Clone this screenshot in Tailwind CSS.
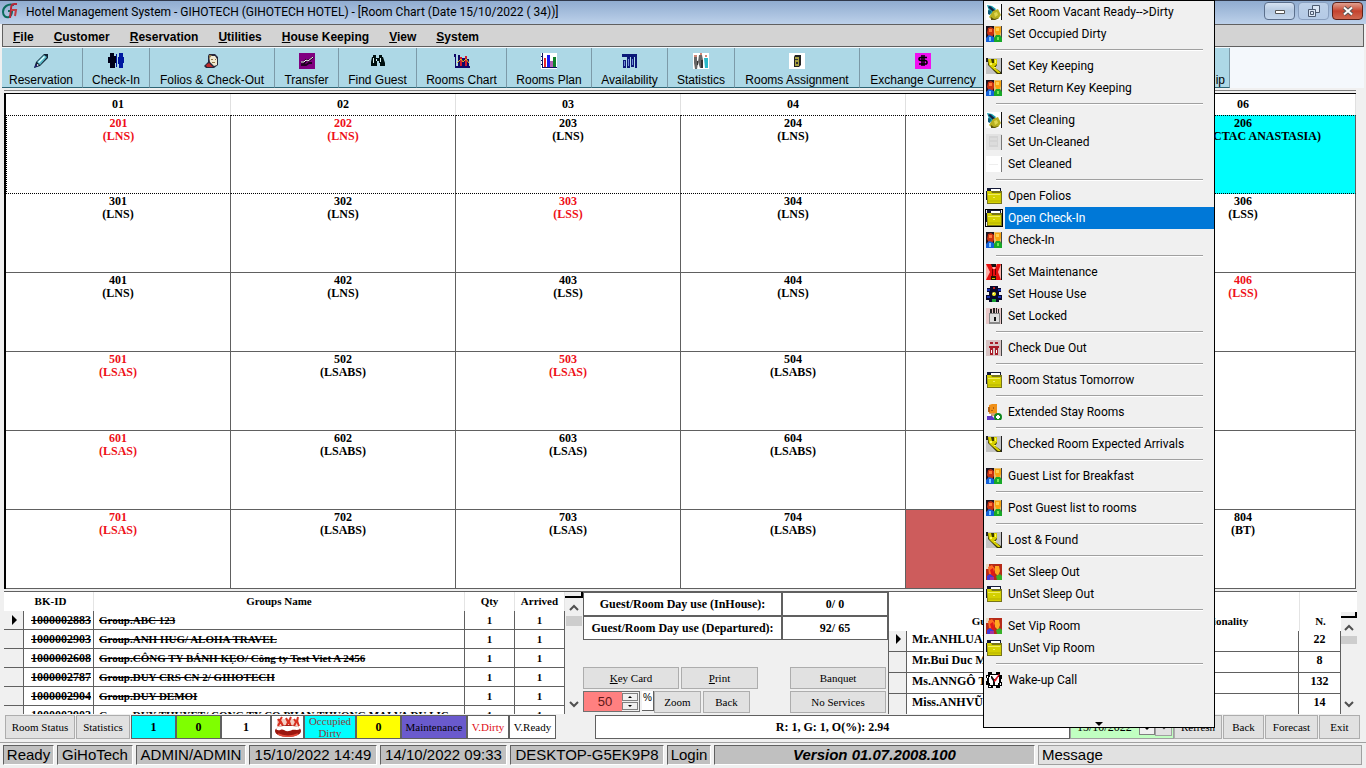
<!DOCTYPE html>
<html lang="en">
<head>
<meta charset="utf-8">
<title>Hotel Management System</title>
<script src="https://cdn.jsdelivr.net/npm/@tailwindcss/browser@4"></script>
</head>
<body class="relative flex h-screen w-full flex-col overflow-hidden bg-[#f0f0f0] font-['Liberation_Sans',sans-serif] text-xs text-black">

<svg class="hidden" aria-hidden="true">
  <symbol id="i-broom" viewBox="0 0 16 16"><path fill="#fff" d="M0 0h15v16H0z"/><path fill="#111" d="M15 0h1v16h-1z"/><path fill="#1aa0b0" d="M1 1l5 1 4 3-5 6-2-4z"/><path fill="#124" d="M2 3l2-1 7 6-3 1z"/><path fill="#0c5a78" d="M2 6l3 1-1 4-2-1z"/><path fill="#b8b020" d="M7 7l5-2 3 6-3 4-6 1-3-3z"/><path fill="#e0d850" d="M8 9l3-1 1 3-3 2z"/><path fill="#5a5410" d="M5 13l3 2 5-1-4 2H5z"/></symbol>
  <symbol id="i-people" viewBox="0 0 16 16"><path fill="#1c1420" d="M0 0h8v12H0z"/><path fill="#e8c070" d="M8 0h7v16H8z"/><path fill="#444" d="M15 0h1v16h-1z"/><path fill="#c83010" d="M2 2l3-1 3 2v5l-2 3H3L1 7z"/><path fill="#ff7838" d="M3 3h3v3H3z"/><path fill="#f8a410" d="M9 1h6v5l-2 4h-2L9 6z"/><path fill="#ffd050" d="M10 2h3v3h-3z"/><path fill="#1460d8" d="M0 12l3-3 3 1 3 2v4H0z"/><path fill="#7cc8ff" d="M3 11h2v4H3z"/><path fill="#18a828" d="M8 12l2-3h4l2 3v4H8z"/><path fill="#70e850" d="M11 11h2v3h-2z"/></symbol>
  <symbol id="i-redpeople" viewBox="0 0 16 16"><path fill="#b52a18" d="M0 0h16v16H0z"/><path fill="#e8d8c0" d="M0 0h3v5H0z"/><path fill="#ff6a20" d="M2 3l4-2 3 4-2 6-4-1z"/><path fill="#e01818" d="M4 6l3-2 2 8-3 1z"/><path fill="#ffa820" d="M9 2h4l1 5-2 5-3-3z"/><path fill="#4038d8" d="M1 12l3-2 4 3v3H1z"/><path fill="#a030a0" d="M4 13h4v3H4z"/><path fill="#38b028" d="M10 12l4-2 2 2v4h-5z"/></symbol>
  <symbol id="i-key" viewBox="0 0 16 16"><path fill="#c4c4c4" d="M0 0h15v16H0z"/><path fill="#222" d="M15 0h1v16h-1zM0 0h2v4H0z"/><path fill="#3c3a00" d="M2 1h9v6l-2 3 6 4v2h-4L6 11 2 7z"/><path fill="#d8d000" d="M2 1h3l1 4h2V1h3v5L8 9l6 5v1h-2L6 10 3 7z"/><path fill="#fff860" d="M4 5h2v2H4zM8 9h2v1H8zM9 2h1v3H9z"/></symbol>
  <symbol id="i-gray" viewBox="0 0 16 16"><path fill="#e2e2e2" d="M0 0h16v16H0z"/><path fill="#d4d4d4" d="M3 2h9v11H3z"/><path fill="#dcdcdc" d="M4 4h7v2H4zM4 8h7v3H4z"/><path fill="#777" d="M15 1h1v15h-1z"/></symbol>
  <symbol id="i-white" viewBox="0 0 16 16"><path fill="#fff" d="M0 0h16v16H0z"/><path fill="#eee" d="M3 8h9v1H3z"/><path fill="#777" d="M15 1h1v15h-1z"/></symbol>
  <symbol id="i-folder" viewBox="0 0 16 16"><path fill="#141a38" d="M1 0h14v4H1zM0 3h1v9H0z"/><path fill="#fff" d="M5 1h9v2H5z"/><path fill="#77741a" d="M1 3h15v13H1z"/><path fill="#d4d000" d="M1 3h4l1 2h9v10H2z"/><path fill="#f0ec60" d="M2 6h12v1H2zM7 9h2v1H7z"/><path fill="#c4c000" d="M2 12h13v2H2z"/></symbol>
  <symbol id="i-maint" viewBox="0 0 16 16"><path fill="#ffb0a8" d="M0 0h15v16H0z"/><path fill="#111" d="M15 0h1v16h-1zM5 0h5v3H5z"/><path fill="#e81010" d="M0 0h5l2 5h2l2-5h4l-3 8 3 8h-5l-1-4H7l-2 4H0l4-8z"/><path fill="#600" d="M6 5h1v7H6zM9 5h1v6H9z"/><path fill="#221800" d="M5 12h5v4H5z"/><path fill="#d0c000" d="M6 14h3v1H6z"/></symbol>
  <symbol id="i-house" viewBox="0 0 16 16"><path fill="#08082c" d="M4 0h8v2h3v4h-2v3h3v5h-3v2H3v-2H0V9h3V6H1V2h3z"/><path fill="#1830b0" d="M1 3h3v2H1zM12 3h3v2h-3zM1 10h3v2H1zM12 10h3v2h-3z"/><circle cx="8" cy="8" r="2" fill="#f8f020"/><path fill="#fff" d="M7 7h1v1H7z"/><path fill="#18a030" d="M6 13h4v3H6z"/><path fill="#c02020" d="M7 1h2v2H7z"/></symbol>
  <symbol id="i-lock" viewBox="0 0 16 16"><path fill="#e8c8c8" d="M0 0h15v16H0z"/><path fill="#222" d="M15 0h1v16h-1zM4 1h2v4H4zM7 0h2v5H7zM10 0h1v5h-1zM12 1h1v4h-1z"/><path fill="#888" d="M3 5h11v11H3z"/><path fill="#ddd" d="M4 6h9v8H4z"/><path fill="#111" d="M8 9h2v4H8z"/></symbol>
  <symbol id="i-due" viewBox="0 0 16 16"><path fill="#d8c4c4" d="M0 0h15v16H0z"/><path fill="#444" d="M15 0h1v16h-1z"/><path fill="#a81c28" d="M4 2h3v2H4zM9 2h3v2H9zM3 6h10v2H3zM4 8h3v7H4zM9 8h3v7H9z"/><path fill="#fff" d="M5 10h1v3H5zM10 10h1v3h-1z"/></symbol>
  <symbol id="i-extend" viewBox="0 0 16 16"><path fill="#f09018" d="M3 1l3-1h5v10H3z"/><path fill="#b06010" d="M2 3h2v5H2zM7 3h1v2H7zM5 6h2v1H5z"/><path fill="#d8a070" d="M3 9h7v3H3z"/><path fill="#6038c8" d="M1 12l4-1 5 5H1z"/><path fill="#fff" d="M1 10h4v2H1z"/><circle cx="12" cy="13" r="4" fill="#108820"/><path fill="#fff" d="M11 11h2v1h1v2h-1v1h-2v-1h-1v-2h1z"/></symbol>
  <symbol id="i-wake" viewBox="0 0 16 16"><path fill="#000" d="M2 0h4v2h4V0h4v3h2v4h-1v3h1v4h-2v2h-4v-2H7v2H2v-3H0V9h1V6H0V3h2z"/><path fill="#fff" d="M4 3h8v2h1v6h-1v2H4v-2H3V5h1zM1 4h1v2H1zM14 11h1v2h-1zM3 14h2v1H3z"/><path fill="#111" d="M5 4h1l2 3h1v6H7V9L5 6z"/><path fill="#e01020" d="M8 8l5-6h1l-4 7-2 1z"/></symbol>
</svg>

<!-- Title bar -->
<header class="flex h-6 shrink-0 items-start border-t border-[#30384a] bg-gradient-to-b from-[#90acd0] to-[#bdd1ea] pr-[3px] pl-0.5">
  <svg class="mt-0.5 h-4 w-4" viewBox="0 0 16 16"><path d="M12 2C6 0 1 4 1 9c0 4 3 6 6 5 2-1 3-3 3-6H6" fill="none" stroke="#0b6b5c" stroke-width="2"/><path d="M15 1h-3c-2 0-3 2-3 5l-1 9" fill="none" stroke="#b5273a" stroke-width="2"/><path d="M9 7h5l-1 6" fill="none" stroke="#c23a42" stroke-width="2"/></svg>
  <h1 class="grow pl-2 font-['Roboto',sans-serif] text-xs leading-[22px]">Hotel Management System - GIHOTECH (GIHOTECH HOTEL) - [Room Chart (Date 15/10/2022 ( 34))]</h1>
  <div class="mt-px flex gap-[3px]">
    <button aria-label="Minimize" class="flex h-[18px] w-[31px] items-center justify-center rounded-sm border border-[#5b6f8c] bg-gradient-to-b from-[#d5e2f2] via-[#b4c8e0] to-[#c4d6ec]"><svg class="h-3 w-3" viewBox="0 0 12 12"><path d="M1.500 5.500h9v3h-9z" fill="#fff" stroke="#555"/></svg></button>
    <button aria-label="Restore" class="flex h-[18px] w-[31px] items-center justify-center rounded-sm border border-[#8aa0c0] bg-gradient-to-b from-[#bdd0e8] to-[#b4cae6]"><svg class="h-3 w-3" viewBox="0 0 12 12"><path d="M4.500 .5h7v7h-7z" fill="#dbe6f4" stroke="#4c5a70"/><path d="M.5 4.500h7v7h-7z" fill="#dbe6f4" stroke="#4c5a70"/><path d="M2.500 6.500h3v3h-3z" fill="none" stroke="#4c5a70"/></svg></button>
    <button aria-label="Close" class="flex h-[18px] w-[31px] items-center justify-center rounded-sm border border-[#5c2018] bg-gradient-to-b from-[#e0a090] via-[#c4422e] to-[#d06850]"><svg class="h-3 w-3" viewBox="0 0 12 12"><path d="M2 2.500l8 7M10 2.500l-8 7" stroke="#555" stroke-width="4"/><path d="M2 2.500l8 7M10 2.500l-8 7" stroke="#fff" stroke-width="2"/></svg></button>
  </div>
</header>

<!-- Menu bar -->
<nav class="mx-0.5 flex h-[23px] shrink-0 items-center gap-5 border border-[#606060] bg-[#d3d3d3] pt-0.5 pl-2.5 font-bold">
  <a href="#"><u>F</u>ile</a><a href="#"><u>C</u>ustomer</a><a href="#"><u>R</u>eservation</a><a href="#"><u>U</u>tilities</a><a href="#"><u>H</u>ouse Keeping</a><a href="#"><u>V</u>iew</a><a href="#"><u>S</u>ystem</a>
</nav>

<!-- Tool bar -->
<div class="mx-0.5 flex h-[41px] shrink-0 bg-[#f4f8fc] pt-px [&>button]:flex [&>button]:flex-col [&>button]:items-center [&>button]:justify-between [&>button]:border-r [&>button]:border-b [&>button]:border-[#7c9aa8] [&>button]:border-b-[#2d6474] [&>button]:bg-[#add8e6] [&>button]:pt-[5px] [&>button]:leading-[14px] [&>button]:whitespace-nowrap [&>button]:shrink-0 [&_svg]:size-4">
  <button class="w-[81px] pr-0.5"><svg viewBox="0 0 16 16"><path fill="#123" d="M1 15l2-6 8-8h4v4l-8 8z"/><path fill="#58b8c8" d="M4 9l7-7 3 2-7 8z"/><path fill="#dff" d="M5 9l6-6 1 1-6 6z"/><path fill="#227" d="M1 15l2-4 2 2z"/><path fill="#fff" d="M4 11l2 1-2 1z"/></svg>Reservation</button>
  <button class="w-[67px]"><svg viewBox="0 0 16 16"><path fill="#000018" d="M2 0h4v3h2v7H7v5H2v-5H0V4h2z"/><path fill="#0018a0" d="M8 1h1v13H8zM11 0h4v4h1v6h-1v5h-4v-4h-1V4h1z"/></svg>Check-In</button>
  <button class="w-[125px]"><svg viewBox="0 0 16 16"><path fill="#28283c" d="M5 1h6l3 3v8l-4 3H2L0 13l4-4V3z"/><path fill="#f0e8d0" d="M5 3h6l2 3v6l-3 1-4-4z"/><path fill="#907848" d="M5 2h3l-3 4zM7 6h2v1H7zM11 6h1v1h-1zM8 9h3v1H8z"/><path fill="#c02828" d="M2 12l3-2 4 4H3z"/></svg>Folios &amp; Check-Out</button>
  <button class="w-[64px]"><svg viewBox="0 0 16 16"><path fill="#800080" d="M0 0h16v16H0z"/><path d="M2 10l2-1 1 2 2-4 2 1 2-1 3-3M2 12h5l3-2 3 0" fill="none" stroke="#200020" stroke-width="2"/><path d="M2 9l3 0 2-2 2 1 5-4" fill="none" stroke="#fff"/></svg>Transfer</button>
  <button class="w-[78px]"><svg viewBox="0 0 16 16"><path fill="#001010" d="M2 4h1V2h3v3h3V2h3v2h1l2 6v3h-5v-3H9V8H7v5H1V9z"/><path fill="#d8f0f0" d="M3 5h1v5H3zM6 6h1v2H6zM10 5h1v4h-1z"/></svg>Find Guest</button>
  <button class="w-[90px]"><svg viewBox="0 0 16 16"><path fill="#100868" d="M0 1h2v12h14v2H1V4H0zM4 2h2v11H4zM8 5h3v8H8zM13 6h2v7h-2z"/><path fill="#d01830" d="M6 4h2v9H6zM11 3h2v10h-2z"/><path d="M3 10l4-4 2 3 3-3 3 4" fill="none" stroke="#e8b818"/></svg>Rooms Chart</button>
  <button class="w-[85px]"><svg viewBox="0 0 16 16"><path fill="#fff" d="M0 0h16v16H0z"/><path fill="#101060" d="M1 0h1v14h14v1H1zM0 3h1v1H0zM0 7h1v1H0zM0 11h1v1H0z"/><path fill="#e82828" d="M3 5h2v9H3z"/><path fill="#1818f0" d="M6 2h3v12H6z"/><path fill="#b060b0" d="M9 8h3v6H9z"/><path fill="#108028" d="M12 4h3v10h-3z"/></svg>Rooms Plan</button>
  <button class="w-[76px]"><svg viewBox="0 0 16 16"><path fill="#0c1878" d="M0 1h15v3H0zM1 7h3v8H1zM5 4h3v11H5zM9 4h3v10H9zM13 4h2v11h-2z"/><path fill="#7088d8" d="M2 8h1v5H2zM6 6h1v7H6zM10 6h1v6h-1z"/></svg>Availability</button>
  <button class="w-[67px]"><svg viewBox="0 0 16 16"><path fill="#fff" d="M0 0h16v16H0z"/><path fill="#666" d="M1 4h3v3l1 3-1 6H2l-1-6zM6 2h3l1 5-1 8H7L5 9z"/><path fill="#d08878" d="M1 2h3v2H1zM7 0h2v2H7zM12 2h2v2h-2z"/><path fill="#28b8c8" d="M11 5h4v10h-3z"/><path fill="#333" d="M8 7h2v8H8zM4 8h1v4H4z"/></svg>Statistics</button>
  <button class="w-[125px]"><svg viewBox="0 0 16 16"><path fill="#fff" d="M0 0h16v16H0z"/><path fill="#222" d="M6 2h6v10l-2 2H5V4z"/><path fill="#a8a040" d="M6 4h4v9H6z"/><path fill="#333" d="M6 6h3v1H6zM7 9h2v2H7z"/></svg>Rooms Assignment</button>
  <button class="w-[127px]"><svg viewBox="0 0 16 16"><path fill="#f010f0" d="M0 0h16v16H0z"/><path d="M12 4.500H6Q4 4.500 4 6t2 1.500h4Q12 7.500 12 9.500T10 11H4M7 2v11M9 2v11" fill="none" stroke="#000" stroke-width="1.500"/></svg>Exchange Currency</button>
  <button class="grow max-w-[243px] pr-1"><span class="h-4"></span><span class="self-end">ip</span></button>
</div>

<!-- Workspace -->
<main class="mr-[9px] ml-1 mt-0.5 flex min-h-0 grow flex-col">
  <section class="mr-px border-t border-[#808080] pt-0.5">
    <table class="w-full table-fixed border-separate border-spacing-0 border-t border-l-2 border-black bg-white text-center font-['Liberation_Serif',serif] text-xs leading-[13px] font-bold">
      <thead><tr id="floors"></tr></thead>
      <tbody id="rooms"></tbody>
    </table>
  </section>

  <div class="mt-0.5 flex h-[123px] shrink-0 border-t border-[#606060] font-['Liberation_Serif',serif] text-[11px] font-bold">
    <!-- Groups -->
    <div class="flex w-[579px] shrink-0 overflow-hidden bg-white">
      <table class="w-[561px] shrink-0 table-fixed border-separate border-spacing-0 self-start [&_td]:h-[19px] [&_td]:border-r [&_td]:border-b [&_td]:border-[#606060] [&_td]:p-0 [&_td]:leading-4 [&_td]:whitespace-nowrap [&_th]:h-[19px] [&_th]:border-r [&_th]:border-[#e4e4e4] [&_th]:p-0">
        <colgroup><col class="w-5"><col class="w-[70px]"><col class="w-[371px]"><col class="w-[50px]"><col class="w-[50px]"></colgroup>
        <thead><tr><th class="!border-white"></th><th class="!pr-4">BK-ID</th><th>Groups Name</th><th>Qty</th><th>Arrived</th></tr></thead>
        <tbody id="groups"></tbody>
      </table>
      <div class="flex w-[18px] flex-col items-center bg-[#f0f0f0]">
        <div class="h-1.5 w-full border-r-2 border-b-2 border-black"></div>
        <svg class="mt-1 h-3 w-3" viewBox="0 0 12 12"><path d="M2 8l4-4 4 4" fill="none" stroke="#505050" stroke-width="2"/></svg>
        <div class="mt-0.5 h-2.5 w-4 bg-[#cdcdcd]"></div>
        <svg class="mt-auto mb-1 h-3 w-3" viewBox="0 0 12 12"><path d="M2 4l4 4 4-4" fill="none" stroke="#505050" stroke-width="2"/></svg>
      </div>
    </div>

    <!-- Day use and actions -->
    <div class="flex w-[305px] shrink-0 flex-col text-xs">
      <dl class="grid grid-cols-[199px_1fr] text-center leading-[22px] [&>*]:h-6 [&>*]:border [&>*]:border-[#606060] [&>*]:bg-white">
        <dt>Guest/Room Day use (InHouse):</dt><dd>0/ 0</dd>
        <dt>Guest/Room Day use (Departured):</dt><dd>92/ 65</dd>
      </dl>
      <div class="mt-auto mb-px flex justify-between pr-0.5 text-[11px] font-normal [&_button]:h-[22px] [&_button]:border [&_button]:border-[#adadad] [&_button]:bg-[#e1e1e1]">
        <div class="flex flex-col gap-0.5">
          <div class="flex gap-0.5"><button class="w-24"><u>K</u>ey Card</button><button class="w-[77px]"><u>P</u>rint</button></div>
          <div class="flex">
            <div class="mr-0.5 flex h-[21px] w-[57px] border border-[#707070] bg-[#f0f0f0] pr-px">
              <input aria-label="Zoom percent" value="50" class="w-[38px] bg-[#ff8080] pl-1 text-center font-['Liberation_Sans',sans-serif] text-[13px] text-[#601818]">
              <div class="flex grow flex-col justify-between py-px [&>i]:flex [&>i]:h-2 [&>i]:items-center [&>i]:justify-center [&>i]:border [&>i]:border-[#808080]"><i><svg class="h-1 w-1" viewBox="0 0 4 4"><path d="M0 3h4L2 1z"/></svg></i><i><svg class="h-1 w-1" viewBox="0 0 4 4"><path d="M0 1h4L2 3z"/></svg></i></div>
            </div>
            <span class="flex h-5 w-3 items-center justify-center border-r border-b border-[#606060] bg-white pb-1.5 font-['Liberation_Sans',sans-serif] text-[10px]">%</span>
            <button class="mr-0.5 w-[47px]">Zoom</button><button class="w-[47px]">Back</button>
          </div>
        </div>
        <div class="flex flex-col gap-0.5"><button class="w-24">Banquet</button><button class="w-24">No Services</button></div>
      </div>
    </div>

    <!-- Guests -->
    <div class="flex grow overflow-hidden border-l border-[#606060] bg-white">
      <table class="w-0 grow table-fixed border-separate border-spacing-0 self-start [&_td]:h-[21px] [&_td]:border-r [&_td]:border-b [&_td]:border-[#606060] [&_td]:p-0 [&_td]:pb-1 [&_td]:leading-none [&_td]:whitespace-nowrap [&_th]:h-[39px] [&_th]:p-0 [&_th]:pb-0.5 [&_th]:align-bottom">
        <colgroup><col class="w-[18px]"><col class="w-[187px]"><col><col class="w-[154px]"><col class="w-[42px]"></colgroup>
        <thead><tr><th></th><th>Guest Name</th><th></th><th>Nationality</th><th class="border-l border-[#e4e4e4]">N.</th></tr></thead>
        <tbody id="guests"></tbody>
      </table>
      <div class="mt-5 flex w-4 shrink-0 flex-col items-center bg-[#f0f0f0]">
        <div class="h-1.5 w-full border-r-2 border-b-2 border-black"></div>
        <svg class="mt-1 h-3 w-3" viewBox="0 0 12 12"><path d="M2 8l4-4 4 4" fill="none" stroke="#505050" stroke-width="2"/></svg>
        <div class="mt-0.5 h-2 w-4 bg-[#cdcdcd]"></div>
        <svg class="mt-auto mb-1 h-3 w-3" viewBox="0 0 12 12"><path d="M2 4l4 4 4-4" fill="none" stroke="#505050" stroke-width="2"/></svg>
      </div>
    </div>
  </div>
</main>

<!-- Room status buttons -->
<div class="mr-1.5 ml-[5px] flex h-6 shrink-0 font-['Liberation_Serif',serif] text-[11px] leading-3 [&>*]:shrink-0 [&>button]:border [&>button]:border-[#adadad] [&>button]:bg-[#e1e1e1] [&>output]:flex [&>output]:items-center [&>output]:justify-center [&>output]:border [&>output]:border-[#606060] [&>output]:text-center">
  <button class="mr-px w-[70px]">Room Status</button>
  <button class="mr-px w-[54px]">Statistics</button>
  <output class="w-[45px] bg-[#00ffff] text-xs font-bold">1</output>
  <output class="w-[45px] bg-[#7fff00] text-xs font-bold">0</output>
  <output class="w-[50px] bg-white text-xs font-bold">1</output>
  <output class="w-[33px] bg-white"><svg class="h-[22px] w-7" viewBox="0 0 28 22"><path fill="#f4cfc4" d="M3 3h22v9H3z"/><path d="M4 3l2 3-2 4M8 1l-2 3 3 6M12 2l2 4-2 5M17 1l-2 4 2 6M20 3l2 3-2 4M24 1l-1 4 2 5" fill="none" stroke="#d83020" stroke-width="2"/><ellipse cx="14" cy="15" rx="13" ry="6" fill="#9c1810"/><path d="M2 13c3 3 5-1 8 1s6 1 8 0 5 1 8-1c-1-3-5-3-12-3s-11 0-12 3z" fill="#fff"/><path d="M4 18c5 3 15 3 20 0" stroke="#e04838" stroke-width="1.500" fill="none"/></svg></output>
  <output class="w-[52px] bg-[#00ffff] text-[#8b4040]">Occupied Dirty</output>
  <output class="w-[45px] bg-[#ffff00] text-xs font-bold">0</output>
  <output class="w-[66px] bg-[#6a5acd]">Maintenance</output>
  <output class="w-[42px] bg-white text-[#e01020]">V.Dirty</output>
  <output class="w-[47px] bg-white">V.Ready</output>
  <output class="ml-[39px] w-0 min-w-0 !shrink grow bg-white text-xs font-bold">R: 1, G: 1, O(%): 2.94</output>
  <div class="flex w-[104px] items-center border border-[#a0a0a0] bg-[#c1ffc1]">
    <input aria-label="Date" value="15/10/2022" class="w-[68px] bg-transparent pl-1.5 text-xs">
    <button aria-label="Change date" class="flex h-4 w-4 items-center justify-center border border-[#808080] bg-[#f0f0f0]"><svg class="mt-1 h-2 w-2" viewBox="0 0 8 8"><path d="M1 2h6L4 5z"/></svg></button>
    <button aria-label="Open calendar" class="flex h-[18px] w-[17px] items-center justify-center border border-[#a0a0a0] bg-[#e1e1e1]"><svg class="h-2 w-2" viewBox="0 0 8 8"><path d="M1 2l3 3 3-3" fill="none" stroke="#444" stroke-width="2"/></svg></button>
  </div>
  <button class="mr-px w-[48px]">Refresh</button>
  <button class="mr-px w-[41px]">Back</button>
  <button class="mr-px w-[53px]">Forecast</button>
  <button class="w-[41px]">Exit</button>
</div>

<!-- Status bar -->
<footer class="mt-[3px] flex h-[26px] shrink-0 gap-[3px] border-t border-[#a0a0a0] pt-0.5 pr-1 pb-[3px] pl-[3px] text-[15px] leading-[17px] [&>*]:border [&>*]:border-white [&>*]:border-t-[#606060] [&>*]:border-l-[#606060] [&>*]:bg-[#c0c0c0] [&>*]:text-center [&>*]:whitespace-nowrap">
  <span class="w-[51px]">Ready</span><span class="w-[76px]">GiHoTech</span><span class="w-[110px]">ADMIN/ADMIN</span><span class="w-[128px]">15/10/2022 14:49</span><span class="w-[127px]">14/10/2022 09:33</span><span class="w-[154px]">DESKTOP-G5EK9P8</span><span class="w-[44px]">Login</span><span class="w-0 grow font-bold italic">Version 01.07.2008.100</span><span class="w-0 grow !border-[#a0a0a0] !bg-[#e1e1e1] pl-[3px] !text-left">Message</span>
</footer>

<!-- Room context menu -->
<ul id="menu" class="absolute top-0 left-[983px] z-10 h-[728px] w-[232px] border border-black bg-[#f0f0f0] font-['Roboto',sans-serif] text-xs"></ul>

<script>
const $ = id => document.getElementById(id);

$('floors').innerHTML = ['01', '02', '03', '04', '05', '06'].map(f =>
  `<th class="h-[21px] border-r border-[#e0e0e0] p-0">${f}</th>`).join('');

// A leading * marks a dirty room.
const rooms = [
  ['*201|(LNS)', '*202|(LNS)', '203|(LNS)', '204|(LNS)', '', '206|CTAC ANASTASIA)'],
  ['301|(LNS)', '302|(LNS)', '*303|(LSS)', '304|(LNS)', '', '306|(LSS)'],
  ['401|(LNS)', '402|(LNS)', '403|(LSS)', '404|(LNS)', '', '*406|(LSS)'],
  ['*501|(LSAS)', '502|(LSABS)', '*503|(LSAS)', '504|(LSABS)', '', ''],
  ['*601|(LSAS)', '602|(LSABS)', '603|(LSAS)', '604|(LSABS)', '', ''],
  ['*701|(LSAS)', '702|(LSABS)', '703|(LSAS)', '704|(LSABS)', '', '804|(BT)'],
];
$('rooms').innerHTML = rooms.map((row, r) => '<tr>' + row.map((cell, c) => {
  const red = cell[0] === '*' ? 'text-[#ee1018]' : '';
  const bg = r === 0 && c === 5 ? 'bg-[#00ffff]' : r === 5 && c === 4 ? 'bg-[#cd5c5c]' : '';
  const edge = r === 0 ? 'border-t border-t-black border-b-black [border-top-style:dotted] [border-bottom-style:dotted]' : '';
  const left = r === 0 && c === 0 ? 'border-l border-l-black [border-left-style:dotted]' : '';
  const [no, type = ''] = cell.replace('*', '').split('|');
  const indent = r === 0 && c === 5 ? 'pl-12' : '';
  return `<td class="h-[79px] border-r border-b border-[#606060] p-0 pt-px align-top ${edge} ${left} ${bg} ${red}">${no}<br><span class="${indent}">${type}</span></td>`;
}).join('') + '</tr>').join('');

const arrow = '<svg class="mx-auto h-2.5 w-2.5" viewBox="0 0 10 10"><path d="M3 0l5 5-5 5z"/></svg>';

const groups = [
  ['1000002883', 'Group.ABC 123'],
  ['1000002903', 'Group.ANH HUG/ ALOHA TRAVEL'],
  ['1000002608', 'Group.CÔNG TY BÁNH KẸO/ Công ty Test Viet A 2456'],
  ['1000002787', 'Group.DUY CRS CN 2/ GIHOTECH'],
  ['1000002904', 'Group.DUY DEMOI'],
  ['1000002902', 'Group.DUY THUYET/ CONG TY CO PHAN THUONG MAI VA DU LIC'],
];
$('groups').innerHTML = groups.map(([id, name], i) =>
  `<tr><td class="bg-[#f0f0f0]">${i ? '' : arrow}</td><td><s class="block pr-0.5 text-right text-xs leading-4">${id}</s></td><td><s class="block overflow-hidden pl-[5px]">${name}</s></td><td class="text-center">1</td><td class="text-center">1</td></tr>`).join('');

const guests = [['Mr.ANHLUAN', 22], ['Mr.Bui Duc Mi', 8], ['Ms.ANNGÔ T', 132], ['Miss.ANHVŨ N', 14]];
$('guests').innerHTML = guests.map(([name, n], i) =>
  `<tr class="text-xs"><td class="bg-[#f0f0f0]">${i ? '' : arrow}</td><td><span class="pl-[5px]">${name}</span></td><td></td><td></td><td class="text-center">${n}</td></tr>`).join('');

const menu = [
  ['broom', 'Set Room Vacant Ready-->Dirty'], ['people', 'Set Occupied Dirty'], null,
  ['key', 'Set Key Keeping'], ['people', 'Set Return Key Keeping'], null,
  ['broom', 'Set Cleaning'], ['gray', 'Set Un-Cleaned'], ['white', 'Set Cleaned'], null,
  ['folder', 'Open Folios'], ['folder', 'Open Check-In', true], ['people', 'Check-In'], null,
  ['maint', 'Set Maintenance'], ['house', 'Set House Use'], ['lock', 'Set Locked'], null,
  ['due', 'Check Due Out'], null, ['folder', 'Room Status Tomorrow'], null,
  ['extend', 'Extended Stay Rooms'], null, ['key', 'Checked Room Expected Arrivals'], null,
  ['people', 'Guest List for Breakfast'], null, ['people', 'Post Guest list to rooms'], null,
  ['key', 'Lost & Found'], null, ['redpeople', 'Set Sleep Out'], ['folder', 'UnSet Sleep Out'], null,
  ['redpeople', 'Set Vip Room'], ['folder', 'UnSet Vip Room'], null, ['wake', 'Wake-up Call'],
];
$('menu').innerHTML = menu.map(m => {
  if (!m) return '<li class="h-2.5 pt-1"><hr class="mr-[11px] ml-3 border-t border-[#a0a0a0] border-b border-b-white"></li>';
  const [icon, text, on] = m;
  const box = on ? 'outline outline-black' : '';
  const hot = on ? 'bg-[#0078d7] text-white' : '';
  return `<li><button class="flex h-[22px] w-full items-center text-left"><svg class="mr-[3px] ml-0.5 size-4 shrink-0 ${box}"><use href="#i-${icon}"/></svg><span class="h-[22px] grow pl-[3px] leading-[22px] whitespace-nowrap ${hot}">${text.replace('&', '&amp;').replace('>', '&gt;')}</span></button></li>`;
}).join('') + '<li class="absolute right-0 bottom-0 left-0"><svg class="mx-auto h-2 w-2" viewBox="0 0 8 8"><path d="M0 3h8L4 7z"/></svg></li>';
</script>
</body>
</html>
